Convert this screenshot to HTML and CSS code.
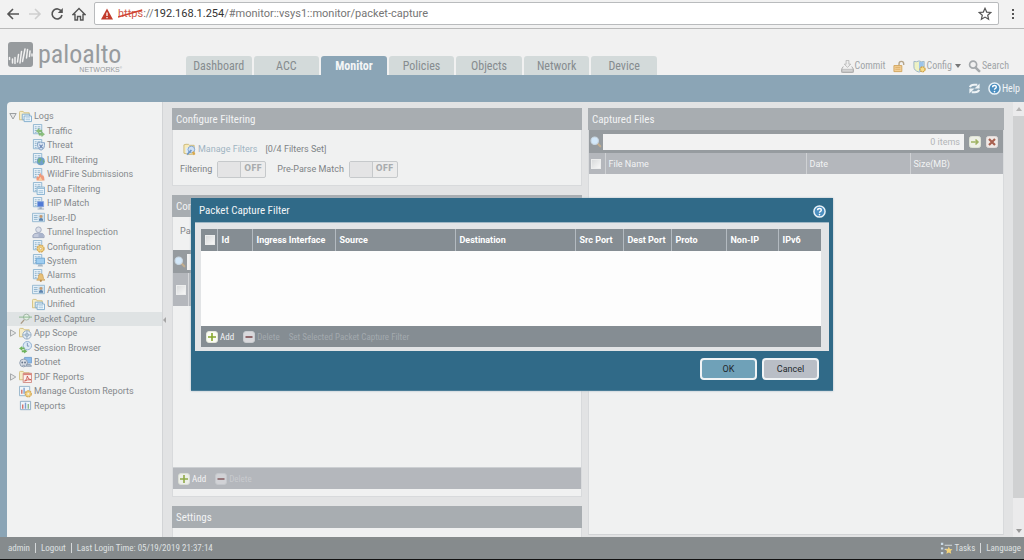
FILE: index.html
```html
<!DOCTYPE html>
<html lang="en">
<head>
<meta charset="utf-8">
<title>Packet Capture</title>
<link rel="stylesheet" href="styles.css">
</head>
<body>
<svg class="defs" aria-hidden="true">
  <defs>
    <symbol id="page" viewBox="0 0 14 14">
      <path d="M1.500 .5h9v10h-9z" fill="#e9f2f9" stroke="#8fb4cf"/>
      <path d="M3 3h2m1 0h3M3 5h2m1 0h3M3 7h2m1 0h3M3 9h2" stroke="#8db0ca" stroke-width="1"/>
    </symbol>
    <symbol id="folder" viewBox="0 0 14 14">
      <path d="M.5 10.500V2.500q0-1 1-1h3l1 1.500h5.500v7.500z" fill="#f5ecc6" stroke="#d4bf7c"/>
    </symbol>
    <symbol id="i-open" viewBox="0 0 8 8">
      <path d="M.8 1.500h6.400L4 7z" fill="#e6e7e7" stroke="#9b9fa1"/>
    </symbol>
    <symbol id="i-shut" viewBox="0 0 8 8">
      <path d="M1.500 .8v6.400L6.800 4z" fill="#e6e7e7" stroke="#a6a9ab"/>
    </symbol>
    <symbol id="i-logs" viewBox="0 0 14 14">
      <use href="#folder"/>
      <path d="M3.500 4.500h8v6h-8z" fill="#eaf3f9" stroke="#7faccc"/>
      <path d="M5.500 6.500h8v6h-8z" fill="#f5fafd" stroke="#7faccc"/>
      <path d="M7 8.500h5M7 10.500h5" stroke="#9cc0da"/>
    </symbol>
    <symbol id="i-traffic" viewBox="0 0 14 14">
      <use href="#page"/>
      <path d="M4.500 7.500l3-2.500v1.500h3v2h-3V10zM13.500 11l-3-2.500V10h-3v2h3v1.500z" fill="#8cc07c" stroke="#6fa962" stroke-width=".5"/>
    </symbol>
    <symbol id="i-threat" viewBox="0 0 14 14">
      <use href="#page"/>
      <path d="M6 4q3.500.5 3.500-1 0 1.500 4 1v3q0 4-3.750 5Q6 11 6 7z" fill="#dce7f3" stroke="#7f9fc4"/>
      <path d="M8 6l3.500 4M11.500 6L8 10" stroke="#6c87b5" stroke-width="1.200"/>
    </symbol>
    <symbol id="i-url" viewBox="0 0 14 14">
      <use href="#page"/>
      <circle cx="9.500" cy="9" r="4.300" fill="#6f9fcb"/>
      <path d="M7 6q2-1.500 3 0T9 9t1 3.500Q7 12 6 9zM11.500 7l2 2-1.500 2.500z" fill="#74b081"/>
    </symbol>
    <symbol id="i-wild" viewBox="0 0 14 14">
      <use href="#page"/>
      <path d="M5 13.500q-1-3 1-5l1 1.500q0-3 2.500-4.500 0 2 1.500 3l.5-1.500q2.500 3 2 6.500z" fill="#f09a7a"/>
      <path d="M7 13.500q0-2 2.500-4 0 2 2 4z" fill="#f8cfa0"/>
    </symbol>
    <symbol id="i-data" viewBox="0 0 14 14">
      <use href="#page"/>
      <path d="M5.500 5.500h8v8h-8z" fill="#eef6fb" stroke="#85b0ce"/>
      <path d="M6 7h7M7 9.500h5M7 11.500h5" stroke="#93bbd6"/>
    </symbol>
    <symbol id="i-hip" viewBox="0 0 14 14">
      <use href="#page"/>
      <path d="M6 5h6.500v5.500H6z" fill="#4f7ad6" stroke="#89a6dc"/>
      <path d="M8 11h2.500v1.500H13v1H6v-1h2z" fill="#9aa9bd"/>
    </symbol>
    <symbol id="i-user" viewBox="0 0 14 14">
      <path d="M.5 2.500h13v9H.5z" fill="#e4eff7" stroke="#94b8d0"/>
      <path d="M2 5h4M2 7h4M2 9h4" stroke="#8db0ca"/>
      <path d="M7 4h5.500v6.500H7z" fill="#bfd6e6"/>
      <circle cx="9.700" cy="6" r="1.600" fill="#c79a6e"/>
      <path d="M7.500 10.500q0-3 2.200-3t2.300 3z" fill="#5d83ad"/>
    </symbol>
    <symbol id="i-tunnel" viewBox="0 0 14 14">
      <circle cx="7" cy="4" r="3" fill="#dde1ea" stroke="#a4adc0"/>
      <path d="M1 12.500V10q1-2.500 6-2.500T13 10v2.500z" fill="#c3cadb" stroke="#98a2ba"/>
      <path d="M7 8h5v4H7z" fill="#a9b4cc"/>
    </symbol>
    <symbol id="i-config" viewBox="0 0 14 14">
      <use href="#page"/>
      <circle cx="9.300" cy="9.300" r="3.600" fill="#f2d587" stroke="#d6ab5a" stroke-width="1.500" stroke-dasharray="2.200 .7"/>
      <circle cx="9.300" cy="9.300" r="1.300" fill="#f2f2f2" stroke="#d2a651" stroke-width=".7"/>
    </symbol>
    <symbol id="i-system" viewBox="0 0 14 14">
      <use href="#page"/>
      <path d="M4.500 4.500h9v6h-9z" fill="#9fcdf0" stroke="#6ea6d4"/>
      <path d="M7 11h4l1 2.500H6z" fill="#a8b8c6"/>
    </symbol>
    <symbol id="i-alarm" viewBox="0 0 14 14">
      <use href="#page"/>
      <path d="M5 12q2-1.500 2-4 0-3 2.500-3T12 8q0 2.500 2 4z" fill="#e8c078" stroke="#c99b50" stroke-width=".7"/>
      <circle cx="9.500" cy="12.700" r="1.200" fill="#b5874a"/>
    </symbol>
    <symbol id="i-scope" viewBox="0 0 14 14">
      <use href="#folder"/>
      <circle cx="8.500" cy="8.500" r="4.500" fill="#e3edf5" stroke="#93a9c0"/>
      <path d="M8.500 4v9M4 8.500h9" stroke="#9bb0c5"/>
      <circle cx="8.500" cy="8.500" r="1.800" fill="none" stroke="#9bb0c5"/>
    </symbol>
    <symbol id="i-capture" viewBox="0 0 14 14">
      <circle cx="8" cy="5.500" r="3.200" fill="#e4f0e4" stroke="#a0b3a4"/>
      <path d="M2 12.500L5.500 8.500" stroke="#a99a85" stroke-width="1.500"/>
      <path d="M0 5.500h14" stroke="#86b58a"/>
    </symbol>
    <symbol id="i-session" viewBox="0 0 14 14">
      <circle cx="9" cy="5" r="4.500" fill="#dce9f5" stroke="#8eaed0"/>
      <path d="M9 2v3.500h2" fill="none" stroke="#7c95b5"/>
      <path d="M0 8l3.500-2.500V7H6v2H3.500v1.500zM9 11l-3.500-2.500V10H3v2h2.500v1.500z" fill="#6fb35d"/>
    </symbol>
    <symbol id="i-botnet" viewBox="0 0 14 14">
      <path d="M6 1.500h7.500v6H6z" fill="#8bb9e8" stroke="#79a3d0"/>
      <circle cx="5" cy="7.500" r="4.200" fill="#dadfe6" stroke="#8e9cae"/>
      <circle cx="3.500" cy="7" r="1" fill="#66758c"/><circle cx="6.500" cy="7" r="1" fill="#66758c"/>
      <path d="M3.500 10h3M8 9h4l1.500 2H8z" stroke="#8e9cae" fill="#b9c4d0"/>
    </symbol>
    <symbol id="i-pdf" viewBox="0 0 14 14">
      <use href="#folder"/>
      <path d="M4.500 3.500h9v10h-9z" fill="#fbf1ef" stroke="#cf8b84"/>
      <path d="M4.500 3.500h9v2h-9z" fill="#d9857c"/>
      <path d="M6 12q3-2 3-5.500.5 4 4 4-4-.5-7 1.500z" fill="none" stroke="#cb5a50"/>
    </symbol>
    <symbol id="i-manage" viewBox="0 0 14 14">
      <path d="M.5 1.500h11v10H.5z" fill="#eff5fa" stroke="#94b3ca"/>
      <path d="M3 9.500V5" stroke="#d5736b" stroke-width="1.500"/><path d="M5.500 9.500V3" stroke="#7d9fd0" stroke-width="1.500"/>
      <circle cx="10" cy="9.500" r="3.200" fill="#f2d587" stroke="#d6ab5a" stroke-width="1.500" stroke-dasharray="2 .7"/>
      <circle cx="10" cy="9.500" r="1" fill="#f2f2f2"/>
    </symbol>
    <symbol id="i-report" viewBox="0 0 14 14">
      <path d="M1.500 2.500h11v9h-11z" fill="#eef4f9" stroke="#8eabc3"/>
      <path d="M4 10.500V6" stroke="#d5736b" stroke-width="1.500"/><path d="M7 10.500V4" stroke="#7d9fd0" stroke-width="1.500"/><path d="M10 10.500V5.500" stroke="#8fb98a" stroke-width="1.500"/>
    </symbol>
    <symbol id="i-wrench" viewBox="0 0 14 14">
      <path d="M1 2q2-1 5-.5l1 1h5V12q-6 1-11-1z" fill="#f7ebbb" stroke="#cbb877"/>
      <path d="M3 5h5v6H3z" fill="#dceafa"/>
      <circle cx="9" cy="7" r="3.600" fill="#cfe0f4" stroke="#7fa4cf"/>
      <path d="M4.500 12.500L9 7.500" stroke="#6f98c8" stroke-width="1.800"/>
      <path d="M10.500 9.500l2 3" stroke="#d8a84e" stroke-width="2.200"/>
    </symbol>
    <symbol id="i-shield" viewBox="0 0 14 14">
      <path d="M1 1.500q3 1 5.500-.5 2.500 1.500 5.500.5v6q0 4-5.500 5.500Q1 11.500 1 7.500z" fill="#eef2c4" stroke="#9bb3c4"/>
      <path d="M6.500 1.500q2.500 1 5 .5v5.500q0 3-5 5z" fill="#9cc4ec"/>
      <circle cx="10.300" cy="10" r="2.700" fill="#f7dd8b" stroke="#cfa040" stroke-width="1.300" stroke-dasharray="1.800 .7"/>
    </symbol>
    <symbol id="i-search" viewBox="0 0 14 14">
      <path d="M8 8l4 4" stroke="#c2ae90" stroke-width="2.500" stroke-linecap="round"/>
      <circle cx="5.500" cy="5.500" r="4.300" fill="#d3e8fa" stroke="#c8d6e1" stroke-width="1.300"/>
    </symbol>
    <symbol id="i-find" viewBox="0 0 14 14">
      <circle cx="5.500" cy="5" r="3.800" fill="none" stroke="#a5a9ac" stroke-width="1.800"/>
      <path d="M8.500 8.500l3.500 3.500" stroke="#a5a9ac" stroke-width="2.800" stroke-linecap="round"/>
    </symbol>
    <symbol id="i-commit" viewBox="0 0 14 14">
      <path d="M5.500.5h3v4h2L7 8 3.500 4.500h2z" fill="#ededed" stroke="#b0b0b0" stroke-width=".8"/>
      <path d="M2.500 7L.5 10v2.500q0 1 1 1h11q1 0 1-1V10l-2-3" fill="none" stroke="#a9a9a9"/>
      <path d="M1 10h12v3H1z" fill="#d2d2d2" stroke="#a9a9a9" stroke-width=".6"/>
    </symbol>
    <symbol id="i-lock" viewBox="0 0 14 14">
      <path d="M6.500 6V4q0-2.500 2.500-2.500T11.500 4v1.500" fill="none" stroke="#b5a58a" stroke-width="1.500"/>
      <path d="M1 6h8.500v6.500H1z" fill="#f3cf96" stroke="#d0a45c"/>
      <path d="M2.500 8h5.500M2.500 10h5.500" stroke="#dcb06a"/>
    </symbol>
    <symbol id="i-help" viewBox="0 0 14 14">
      <circle cx="7" cy="7" r="6" fill="#4c8fc0" stroke="#e9f2f8" stroke-width="1.600"/>
      <path d="M5 5.600Q5 3.800 7 3.800t2 1.600Q9 6.500 7.800 7 7 7.400 7 8.400" fill="none" stroke="#fff" stroke-width="1.500"/>
      <circle cx="7" cy="10.300" r=".9" fill="#fff"/>
    </symbol>
    <symbol id="i-refresh" viewBox="0 0 14 14">
      <path d="M2 5.500Q3 3 6.500 3H10M12 8.500q-1 2.500-4.500 2.500H4" fill="none" stroke="#eef3f6" stroke-width="2.200"/>
      <path d="M12.500 1.500V7H7zM1.500 12.500V7H7z" fill="#eef3f6"/>
    </symbol>
    <symbol id="i-add" viewBox="0 0 12 12">
      <rect x=".5" y=".5" width="11" height="11" rx="2.500" fill="#fbfcf4" stroke="#e4e8dc"/>
      <path d="M6 2v8M2 6h8" stroke="#86a72c" stroke-width="1.600"/>
    </symbol>
    <symbol id="i-del" viewBox="0 0 12 12">
      <rect x=".5" y=".5" width="11" height="11" rx="2.500" fill="#d9d9dd" stroke="#c9ccd0"/>
      <path d="M2.500 6h7" stroke="#7d4b50" stroke-width="1.600"/>
    </symbol>
    <symbol id="i-go" viewBox="0 0 12 12">
      <rect x=".5" y=".5" width="11" height="11" rx="2" fill="#eef0e6" stroke="#dfe3d6"/>
      <path d="M2 6h7M6.500 3.500L9 6 6.500 8.500" fill="none" stroke="#9fb262" stroke-width="1.500"/>
    </symbol>
    <symbol id="i-clear" viewBox="0 0 12 12">
      <rect x=".5" y=".5" width="11" height="11" rx="2" fill="#f0e9e6" stroke="#e3dcda"/>
      <path d="M3 3l6 6M9 3L3 9" stroke="#a8604f" stroke-width="2.200"/>
    </symbol>
    <symbol id="i-tasks" viewBox="0 0 14 14">
      <path d="M1 2h2.500M1 7h2.500M1 12h2.500" stroke="#c9dbe8" stroke-width="2.200"/>
      <path d="M5 3.500h8M5 8h3" stroke="#d4d9db" stroke-width="1.200"/>
      <path d="M9.500 5l1.200 2.500 2.800.3-2 2 .6 2.900-2.600-1.400-2.600 1.400.6-2.900-2-2 2.800-.3z" fill="#f3d37a"/>
    </symbol>
  </defs>
</svg>

<div class="browser">
  <button class="nav" aria-label="Back"><svg viewBox="0 0 14 14"><path d="M13 7H2M7 2L2 7l5 5" fill="none" stroke="#555" stroke-width="1.600"/></svg></button>
  <button class="nav" aria-label="Forward"><svg viewBox="0 0 14 14"><path d="M1 7h11M7 2l5 5-5 5" fill="none" stroke="#cfcfcf" stroke-width="1.600"/></svg></button>
  <button class="nav" aria-label="Reload"><svg viewBox="0 0 14 14"><path d="M11.500 4.500A5 5 0 1 0 12 8" fill="none" stroke="#555" stroke-width="1.600"/><path d="M12.800 1v5h-5z" fill="#555"/></svg></button>
  <button class="nav" aria-label="Home"><svg viewBox="0 0 14 14"><path d="M1 7.500L7 1.500l6 6h-2V13H8.500V9.500h-3V13H3V7.500z" fill="none" stroke="#555" stroke-width="1.400"/></svg></button>
  <div class="address">
    <svg class="warn" viewBox="0 0 12 12"><path d="M6 .5l6 11H0z" fill="#c23b2c"/><path d="M6 4.500v3.500M6 9v1.300" stroke="#fff" stroke-width="1.300"/></svg>
    <span class="url"><span class="scheme">https<svg class="strike" viewBox="0 0 27 10" preserveAspectRatio="none" aria-hidden="true"><path d="M0 8L26 1" stroke="#d0402f" stroke-width="1.300"/></svg></span>://<b>192.168.1.254</b>/#monitor::vsys1::monitor/packet-capture</span>
    <svg class="star" viewBox="0 0 14 14"><path d="M7 1.300l1.700 3.800 4.100.4-3.100 2.700.9 4L7 10.100l-3.600 2.100.9-4L1.200 5.500l4.100-.4z" fill="none" stroke="#555" stroke-width="1.200"/></svg>
  </div>
  <button class="dots" aria-label="Menu"><i></i><i></i><i></i></button>
</div>

<header class="head">
  <div class="logo">
    <svg class="mark" viewBox="0 0 25 25"><rect width="25" height="25" rx="3" fill="#979b9e"/><path d="M1.500 15.500v2M4.500 17v4M7 15.500v6M10.500 12.500l-1 7.500M13.500 9.500L12 21M17 7l-2.500 12.500M19.500 7.500L18.500 16M22 9l-.5 5.500M24 12v2" stroke="#f1f1f1" stroke-width="1.500" stroke-linecap="round"/></svg>
    <div class="brand">paloalto<small>NETWORKS<sup>®</sup></small></div>
  </div>
  <nav class="tabs">
    <a href="#dashboard">Dashboard</a><a href="#acc">ACC</a><a href="#monitor" class="on">Monitor</a><a href="#policies">Policies</a><a href="#objects">Objects</a><a href="#network">Network</a><a href="#device">Device</a>
  </nav>
  <div class="tools">
    <a href="#commit"><svg class="ic"><use href="#i-commit"/></svg>Commit</a>
    <a href="#lock" aria-label="Locks"><svg class="ic"><use href="#i-lock"/></svg></a>
    <a href="#config"><svg class="ic"><use href="#i-shield"/></svg>Config<span class="caret"></span></a>
    <a href="#search"><svg class="ic"><use href="#i-find"/></svg>Search</a>
  </div>
</header>

<div class="band">
  <button aria-label="Refresh"><svg class="ic"><use href="#i-refresh"/></svg></button>
  <a href="#help"><svg class="ic"><use href="#i-help"/></svg>Help</a>
</div>

<div class="work">
  <aside class="side">
    <ul class="tree">
      <li><svg class="tw"><use href="#i-open"/></svg><svg class="ic"><use href="#i-logs"/></svg>Logs</li>
      <li class="sub"><svg class="ic"><use href="#i-traffic"/></svg>Traffic</li>
      <li class="sub"><svg class="ic"><use href="#i-threat"/></svg>Threat</li>
      <li class="sub"><svg class="ic"><use href="#i-url"/></svg>URL Filtering</li>
      <li class="sub"><svg class="ic"><use href="#i-wild"/></svg>WildFire Submissions</li>
      <li class="sub"><svg class="ic"><use href="#i-data"/></svg>Data Filtering</li>
      <li class="sub"><svg class="ic"><use href="#i-hip"/></svg>HIP Match</li>
      <li class="sub"><svg class="ic"><use href="#i-user"/></svg>User-ID</li>
      <li class="sub"><svg class="ic"><use href="#i-tunnel"/></svg>Tunnel Inspection</li>
      <li class="sub"><svg class="ic"><use href="#i-config"/></svg>Configuration</li>
      <li class="sub"><svg class="ic"><use href="#i-system"/></svg>System</li>
      <li class="sub"><svg class="ic"><use href="#i-alarm"/></svg>Alarms</li>
      <li class="sub"><svg class="ic"><use href="#i-user"/></svg>Authentication</li>
      <li class="sub"><svg class="ic"><use href="#i-logs"/></svg>Unified</li>
      <li class="sel"><span class="tw"></span><svg class="ic"><use href="#i-capture"/></svg>Packet Capture</li>
      <li><svg class="tw"><use href="#i-shut"/></svg><svg class="ic"><use href="#i-scope"/></svg>App Scope</li>
      <li><span class="tw"></span><svg class="ic"><use href="#i-session"/></svg>Session Browser</li>
      <li><span class="tw"></span><svg class="ic"><use href="#i-botnet"/></svg>Botnet</li>
      <li><svg class="tw"><use href="#i-shut"/></svg><svg class="ic"><use href="#i-pdf"/></svg>PDF Reports</li>
      <li><span class="tw"></span><svg class="ic"><use href="#i-manage"/></svg>Manage Custom Reports</li>
      <li><span class="tw"></span><svg class="ic"><use href="#i-report"/></svg>Reports</li>
    </ul>
  </aside>
  <div class="split"></div>

  <main class="main">
    <div class="col left">
      <section class="panel">
        <h2>Configure Filtering</h2>
        <div class="filters">
          <div class="line"><a href="#filters"><svg class="ic"><use href="#i-wrench"/></svg>Manage Filters</a><span>[0/4 Filters Set]</span></div>
          <div class="line two">
            <span id="lf">Filtering</span><button class="switch" role="switch" aria-checked="false" aria-labelledby="lf"><i></i>OFF</button>
            <span id="lp">Pre-Parse Match</span><button class="switch" role="switch" aria-checked="false" aria-labelledby="lp"><i></i>OFF</button>
          </div>
        </div>
      </section>
      <section class="panel grow">
        <h2>Configure Capturing</h2>
        <div class="caprow">Packet Capture</div>
        <div class="grid">
          <div class="find"><svg class="ic"><use href="#i-search"/></svg><input type="text" aria-label="Search stages"></div>
          <div class="stagehead"><span><input type="checkbox" aria-label="Select all stages"></span></div>
          <div class="fill"></div>
          <div class="bar"><button><svg><use href="#i-add"/></svg>Add</button><button class="off"><svg><use href="#i-del"/></svg>Delete</button></div>
        </div>
      </section>
      <section class="panel">
        <h2>Settings</h2>
        <div class="stub"></div>
      </section>
    </div>
    <section class="panel files">
      <h2>Captured Files</h2>
      <div class="find"><svg class="ic"><use href="#i-search"/></svg><input type="text" aria-label="Search files" placeholder="0 items"><button aria-label="Apply"><svg><use href="#i-go"/></svg></button><button aria-label="Clear"><svg><use href="#i-clear"/></svg></button></div>
      <table>
        <thead><tr><th class="ck"><input type="checkbox" aria-label="Select all files"></th><th class="fn">File Name</th><th class="dt">Date</th><th>Size(MB)</th></tr></thead>
      </table>
    </section>
  </main>
  <div class="scroll"><span class="up"></span><span class="thumb"></span><span class="down"></span></div>
</div>

<footer class="foot">
  <span>admin</span><i></i><a href="#logout">Logout</a><i></i><span>Last Login Time: 05/19/2019 21:37:14</span>
  <a class="tasks" href="#tasks"><svg class="ic"><use href="#i-tasks"/></svg>Tasks</a><i></i><a href="#language">Language</a>
</footer>

<div class="overlay">
  <div class="dialog" role="dialog" aria-labelledby="dt">
    <div class="title"><h1 id="dt">Packet Capture Filter</h1><button aria-label="Help"><svg class="ic"><use href="#i-help"/></svg></button></div>
    <div class="inner">
      <table>
        <colgroup><col class="c1"><col class="c2"><col class="c3"><col class="c4"><col class="c4"><col class="c5"><col class="c5"><col class="c6"><col class="c7"><col></colgroup>
        <thead><tr><th><input type="checkbox" aria-label="Select all filters"></th><th>Id</th><th>Ingress Interface</th><th>Source</th><th>Destination</th><th>Src Port</th><th>Dest Port</th><th>Proto</th><th>Non-IP</th><th>IPv6</th></tr></thead>
        <tbody><tr><td colspan="10"></td></tr></tbody>
      </table>
      <div class="bar"><button><svg><use href="#i-add"/></svg>Add</button><button class="off"><svg><use href="#i-del"/></svg>Delete</button><button class="off">Set Selected Packet Capture Filter</button></div>
    </div>
    <div class="actions"><button class="ok">OK</button><button>Cancel</button></div>
  </div>
</div>
</body>
</html>
```
FILE: styles.css
```css
* { box-sizing: border-box; }
body {
  margin: 0;
  height: 100vh;
  overflow: hidden;
  display: flex;
  flex-direction: column;
  position: relative;
  background: #e2e3e4;
  color: #85898c;
  font: 9px/14px Roboto, "Noto Sans", sans-serif;
}
button, input { font: inherit; color: inherit; margin: 0; padding: 0; border: 0; background: none; }
a { color: inherit; text-decoration: none; }
ul { list-style: none; margin: 0; padding: 0; }
.defs { position: absolute; width: 0; height: 0; }
.ic { width: 13px; height: 13px; flex: none; display: block; }
h1, h2, .tools, .band, .foot { font-family: "Liberation Sans Narrow", "Roboto Condensed", "Liberation Sans", sans-serif; }

/* browser toolbar */
.browser {
  flex: none;
  display: flex;
  align-items: center;
  height: 29px;
  padding: 0 8px 1px 6px;
  background: #f2f2f2;
  border-bottom: 1px solid #b9b9b9;
}
.nav { width: 14px; height: 14px; margin-right: 8px; }
.nav svg, .bar svg, .find button svg { display: block; width: 100%; height: 100%; }
.address {
  flex: 1;
  display: flex;
  align-items: center;
  height: 23px;
  padding: 0 6px;
  background: #fff;
  border: 1px solid #b9bbbd;
  border-radius: 2px;
}
.warn { width: 12px; height: 12px; margin-right: 5px; }
.url { flex: 1; font: 11px/16px Roboto, "Noto Sans", sans-serif; color: #757575; }
.url b { font-weight: 400; color: #333; }
.scheme { position: relative; color: #cf5a4c; }
.strike { position: absolute; left: 0; top: 2px; width: 100%; height: 10px; }
.star { width: 14px; height: 14px; }
.dots { display: grid; gap: 2px; width: 4px; margin-left: 13px; }
.dots i { width: 2px; height: 2px; background: #555; }

/* application header */
.head { flex: none; display: flex; align-items: flex-end; height: 46px; padding: 0 15px 0 8px; background: #f1f1f1; }
.logo { display: flex; align-self: flex-start; width: 178px; gap: 5px; padding-top: 13px; }
.mark { width: 25px; height: 25px; }
.brand { display: flex; flex-direction: column; width: 84px; font: 26px/24px "Roboto Condensed", "Liberation Sans Narrow", sans-serif; color: #979b9e; }
.brand small { align-self: flex-end; font: 7px/7px "Liberation Sans", sans-serif; }
.brand sup { font-size: 3px; line-height: 1px; }
.tabs { display: grid; grid-template-columns: repeat(7, 1fr); gap: 2px; width: 471px; font: 12px/19px "Roboto Condensed", sans-serif; text-align: center; }
.tabs a { height: 19px; padding-top: 1px; background: #d3dada; color: #868c8f; border-radius: 3px 3px 0 0; }
.tabs .on { background: #8ba5b6; color: #f4f6f7; font-weight: 700; }
.tools { flex: 1; display: flex; justify-content: flex-end; gap: 7px; padding-bottom: 2px; font-size: 10px; color: #a0a4a7; }
.tools a { display: flex; align-items: center; gap: 1px; }
.caret { margin-left: 2px; border: 3px solid transparent; border-top: 4px solid #777; border-bottom: 0; }
.band { flex: none; display: flex; justify-content: flex-end; align-items: center; gap: 7px; height: 27px; padding-right: 4px; background: #8ba5b6; color: #f0f4f6; font-size: 10px; }
.band a { display: flex; align-items: center; gap: 1px; }

/* work area */
.work { flex: 1; min-height: 0; display: flex; border-left: 7px solid #8ba5b6; background: linear-gradient(#8ba5b6, #8ba5b6) 0 0 / 6px 6px no-repeat; }
.side { width: 156px; background: #f1f2f2; border-right: 1px solid #d2d4d6; border-radius: 4px 0 0 0; padding-top: 7px; }
.tree { display: grid; grid-auto-rows: 1fr; height: 304px; }
.tree li { display: flex; align-items: center; gap: 2px; padding-left: 2px; white-space: nowrap; }
.tree .sub { padding-left: 25px; }
.tree .sel { background: #dfe3e4; }
.tw { width: 8px; height: 8px; flex: none; display: block; }
.split { width: 8px; display: grid; align-items: center; }
.split::before { content: ""; width: 0; border: 3px solid transparent; border-right-color: #a5a5a5; border-left: 0; }

.main { flex: 1; min-width: 0; display: grid; grid-template-columns: 410fr 416fr; gap: 6px; padding: 6px 9px 0 1px; }
.col { display: flex; flex-direction: column; gap: 9px; min-height: 0; }
.panel { background: #f0f1f1; border: 1px solid #d8dadc; border-top: 0; }
.panel h2 { margin: 0 -1px; height: 22px; padding-left: 4px; background: #a8adb1; color: #f2f3f4; font-size: 11px; font-weight: 400; line-height: 23px; }
.filters { height: 55px; padding: 10px 7px 0; color: #7e8386; }
.line { display: flex; align-items: center; gap: 8px; height: 18px; }
.line a { display: flex; align-items: center; gap: 2px; padding-left: 3px; color: #9fb4c2; }
.line.two { gap: 5px; margin-top: 2px; }
.switch { display: flex; align-items: center; width: 49px; height: 17px; margin-right: 6px; border: 1px solid #c6c9cb; border-radius: 2px; background: #ececec; color: #a9acae; font: 700 8px/14px "DejaVu Sans", sans-serif; }
.switch i { width: 23px; height: 15px; margin-right: 3px; background: #e4e4e5; border-right: 1px solid #c6c9cb; }
.grow { flex: 1; display: flex; flex-direction: column; padding-bottom: 7px; }
.caprow { height: 33px; padding: 7px 7px 0; color: #7e8386; }
.grid { flex: 1; display: flex; flex-direction: column; }
.find { display: flex; align-items: center; height: 23px; padding: 0 5px 0 1px; gap: 5px; background: #969b9f; }
.find input { flex: 1; min-width: 0; height: 16px; padding: 0 4px; background: #f2f2f2; text-align: right; }
.find .ic { width: 12px; height: 12px; }
.find .ic + input { margin-left: -4px; }
.find input::placeholder { color: #b3b5b7; opacity: 1; }
.find button { width: 12px; height: 12px; }
.stagehead { height: 33px; background: #b4b7bc; }
.stagehead span { display: flex; align-items: center; justify-content: center; width: 16px; height: 33px; border-right: 1px solid #d4d6d9; }
input[type="checkbox"] { appearance: none; display: block; width: 10px; height: 10px; background: linear-gradient(135deg, #d9dbdc, #f6f6f6); border: 1px solid #eceded; }
.fill { flex: 1; }
.bar { display: flex; align-items: center; gap: 9px; height: 22px; padding: 0 5px; background: #b4b7bc; color: #f4f4f5; border-top: 1px solid #cccfd2; font-family: "Roboto Condensed", sans-serif; }
.bar button { display: flex; align-items: center; gap: 2px; }
.bar svg { width: 12px; height: 12px; }
.bar .off { color: #c8cace; }
.stub { height: 9px; }
.panel:last-child { border-bottom: 0; }
.col .bar svg { opacity: .8; }
.files { display: flex; flex-direction: column; margin-bottom: 2px; }
.files.panel { border-bottom: 1px solid #d2d4d6; }
table { border-collapse: collapse; table-layout: fixed; width: 100%; }
th { padding: 0 4px; text-align: left; font-weight: 400; color: #f2f3f4; }
.files th { height: 21px; padding: 0 3px; background: #b4b7bc; border-right: 1px solid #cfd1d4; }
.files .ck { width: 16px; padding: 0 2px; }
.files .fn { width: 201px; }
.files .dt { width: 104px; }
.files th:last-child { border-right: 0; }
.scroll { width: 11px; display: flex; flex-direction: column; align-items: center; background: #ebebec; padding: 5px 0 4px; }
.scroll .thumb { width: 100%; flex: 1; margin: 5px 0 31px; background: #d0d1d2; }
.up, .down { border: 3px solid transparent; border-bottom: 4px solid #b5b5b5; border-top: 0; }
.down { border-bottom: 0; border-top: 4px solid #999; }

.foot { flex: none; display: flex; align-items: center; gap: 5px; height: 23px; padding: 0 3px 0 8px; background: #868b8d; border-bottom: 1px solid #111; color: #dfe1e2; font-size: 9px; }
.foot i { width: 1px; height: 10px; background: #d5d8d9; }
.tasks { display: flex; align-items: center; gap: 2px; margin-left: auto; }

/* modal dialog */
.overlay { position: absolute; inset: 0; display: flex; justify-content: center; align-items: flex-start; padding-top: 198px; }
.dialog { width: 642px; padding: 0 4px; background: #306a88; border-bottom: 1px solid #4b7d97; box-shadow: 0 0 2px #a9bbc6; }
.title { display: flex; align-items: center; justify-content: space-between; height: 24px; padding: 2px 3px 0 4px; }
.title h1 { margin: 0; color: #f2f5f7; font-size: 11px; line-height: 16px; font-weight: 400; }
.inner { padding: 6px 8px 4px 6px; background: #e2e4e6; border-top: 1px solid #9fb7c5; }
.inner th { height: 22px; background: #858d93; border-right: 1px solid #b3bac0; font-weight: 700; color: #fff; white-space: nowrap; }
.inner th:last-child { border-right: 0; }
.inner th:first-child { padding: 0 4px; }
.inner td { height: 75px; padding: 0; background: #fdfdfd; }
.c1 { width: 16px; }
.c2 { width: 35px; }
.c3 { width: 83px; }
.c4 { width: 120px; }
.c5 { width: 48px; }
.c6 { width: 55px; }
.c7 { width: 52px; }
.inner .bar { height: 21px; background: #858d93; border-top-color: #858d93; }
.inner .bar .off { color: #a3a9ae; }
.actions { display: flex; justify-content: flex-end; gap: 5px; padding: 7px 10px 10px; }
.actions button { width: 57px; height: 22px; background: #b9bec6; border: 2px solid #f0f3f5; border-radius: 4px; color: #22282c; }
.actions .ok { background: #6fa1b8; }
```
